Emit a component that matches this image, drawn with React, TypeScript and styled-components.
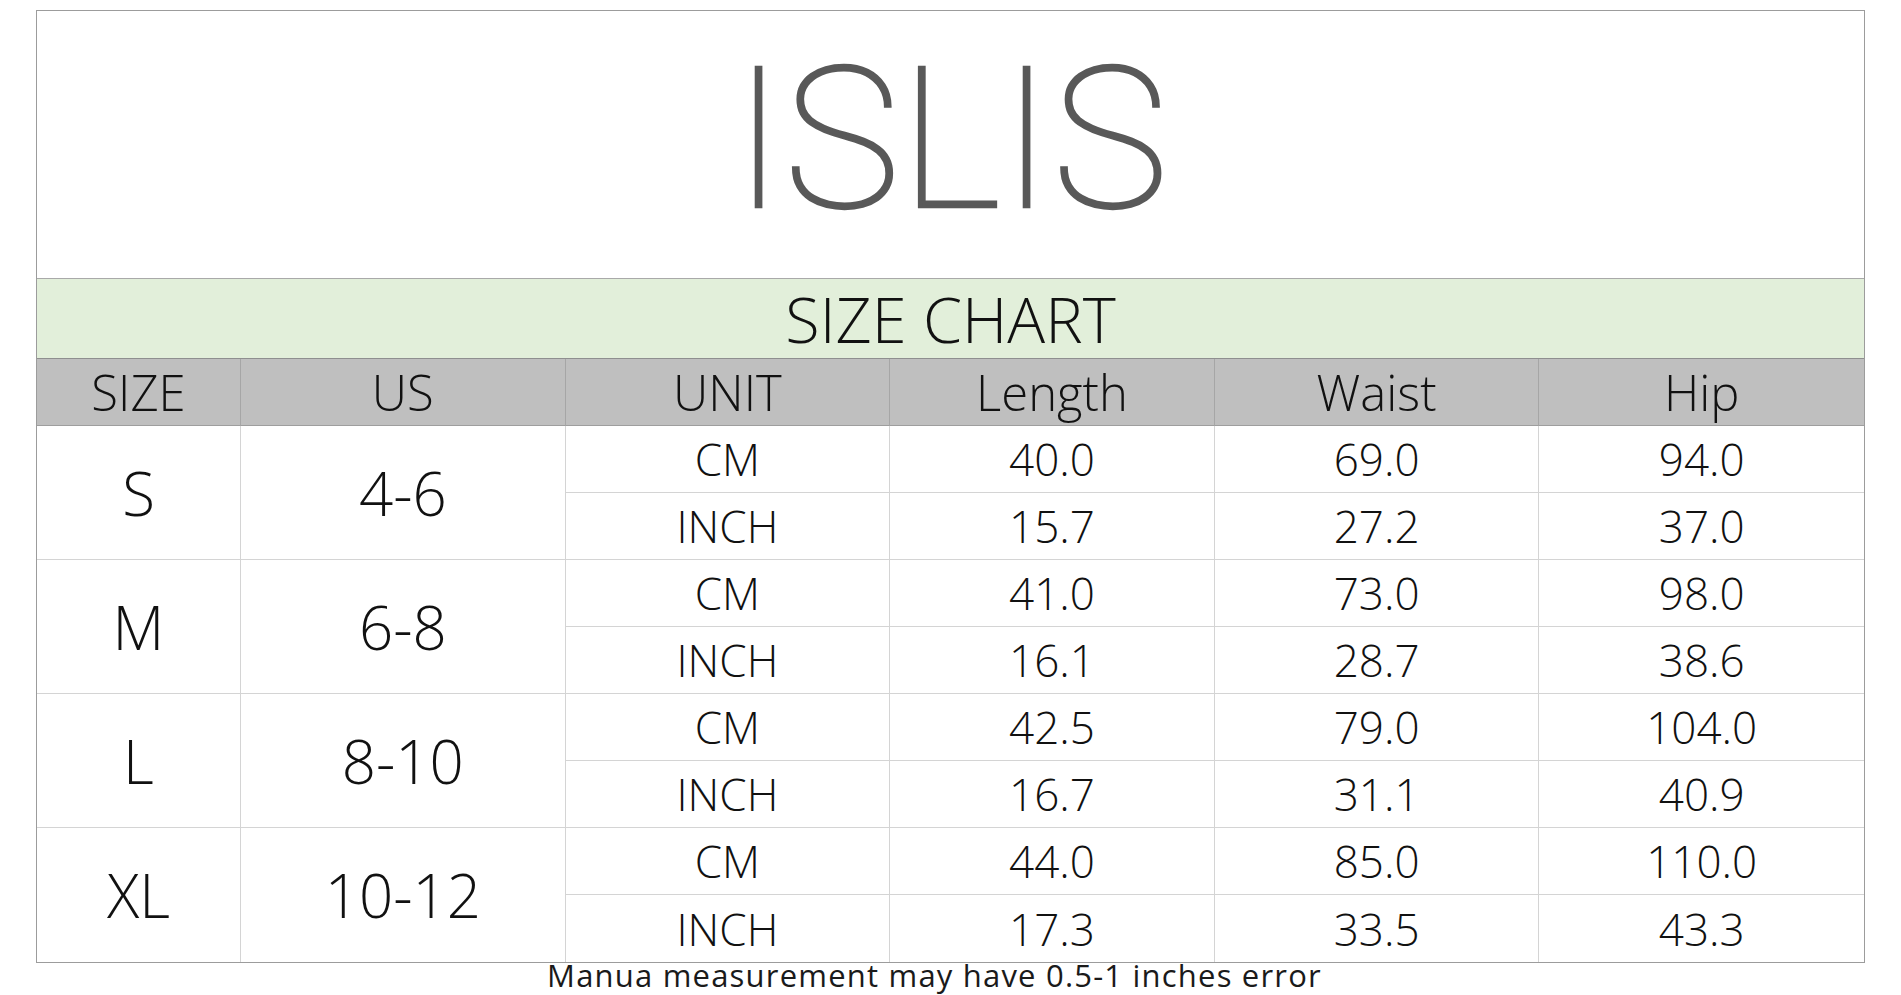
import React from 'react';
import styled, { createGlobalStyle } from 'styled-components';

const GlobalStyle = createGlobalStyle`
  html, body {
    margin: 0;
    padding: 0;
    background: #ffffff;
  }
  body {
    font-family: "Open Sans", "Noto Sans", sans-serif;
    overflow: hidden;
  }
`;

const Page = styled.div`
  width: 1901px;
  height: 995px;
  box-sizing: border-box;
  padding: 10px 0 0 36px;
  overflow: hidden;
`;

const Frame = styled.div`
  width: 1829px;
  box-sizing: border-box;
  border: 1px solid #9c9c9c;
  display: flex;
  flex-direction: column;
`;

const Brand = styled.div`
  height: 268px;
  box-sizing: border-box;
  border-bottom: 1px solid #a9a9a9;
  display: flex;
  align-items: center;
  justify-content: center;
  padding-bottom: 10px;
`;

const Logo = styled.h1`
  margin: 0;
  font-family: Roboto, Lato, sans-serif;
  font-weight: 100;
  font-size: 196px;
  line-height: 1;
  color: #595959;
  -webkit-text-stroke: 2.5px #595959;
  letter-spacing: 0;
`;

const Banner = styled.div`
  height: 80px;
  box-sizing: border-box;
  background: #e2efda;
  border-bottom: 1px solid #8f8f8f;
  display: flex;
  align-items: center;
  justify-content: center;
  font-size: 63px;
  font-weight: 300;
  color: #111;
  line-height: 1;
`;

const Grid = styled.div`
  display: grid;
  grid-template-columns: 204px repeat(5, 1fr);
  grid-auto-rows: 67px;
`;

const HeadCell = styled.div<{ $last?: boolean }>`
  box-sizing: border-box;
  background: #bfbfbf;
  border-right: ${(p) => (p.$last ? 'none' : '1px solid #a6a6a6')};
  border-bottom: 1px solid #9e9e9e;
  display: flex;
  align-items: center;
  justify-content: center;
  font-size: 49px;
  font-weight: 300;
  color: #111;
  line-height: 1;
`;

const Cell = styled.div<{ $last?: boolean; $end?: boolean; $big?: boolean }>`
  box-sizing: border-box;
  grid-row: ${(p) => (p.$big ? 'span 2' : 'auto')};
  border-right: ${(p) => (p.$last ? 'none' : '1px solid #d4d4d4')};
  border-bottom: ${(p) => (p.$end ? 'none' : '1px solid #d4d4d4')};
  display: flex;
  align-items: center;
  justify-content: center;
  font-size: ${(p) => (p.$big ? '60px' : '44px')};
  font-weight: 300;
  color: #111;
  line-height: 1;
`;

const Note = styled.p`
  margin: 0;
  width: 1829px;
  padding: 0 32px 0 0;
  box-sizing: border-box;
  text-align: center;
  font-size: 31px;
  letter-spacing: 1.2px;
  line-height: 24px;
  color: #1a1a1a;
`;

const headers = ['SIZE', 'US', 'UNIT', 'Length', 'Waist', 'Hip'];

const rows = [
  { size: 'S', us: '4-6', cm: ['40.0', '69.0', '94.0'], inch: ['15.7', '27.2', '37.0'] },
  { size: 'M', us: '6-8', cm: ['41.0', '73.0', '98.0'], inch: ['16.1', '28.7', '38.6'] },
  { size: 'L', us: '8-10', cm: ['42.5', '79.0', '104.0'], inch: ['16.7', '31.1', '40.9'] },
  { size: 'XL', us: '10-12', cm: ['44.0', '85.0', '110.0'], inch: ['17.3', '33.5', '43.3'] },
];

export default function App() {
  return (
    <>
      <GlobalStyle />
      <Page>
        <Frame>
          <Brand>
            <Logo>ISLIS</Logo>
          </Brand>
          <Banner>SIZE CHART</Banner>
          <Grid>
            {headers.map((h, i) => (
              <HeadCell key={h} $last={i === headers.length - 1}>
                {h}
              </HeadCell>
            ))}
            {rows.map((r, ri) => {
              const lastGroup = ri === rows.length - 1;
              return (
                <React.Fragment key={r.size}>
                  <Cell $big $end={lastGroup}>{r.size}</Cell>
                  <Cell $big $end={lastGroup}>{r.us}</Cell>
                  <Cell>CM</Cell>
                  {r.cm.map((v, i) => (
                    <Cell key={'c' + i} $last={i === 2}>{v}</Cell>
                  ))}
                  <Cell $end={lastGroup}>INCH</Cell>
                  {r.inch.map((v, i) => (
                    <Cell key={'i' + i} $last={i === 2} $end={lastGroup}>{v}</Cell>
                  ))}
                </React.Fragment>
              );
            })}
          </Grid>
        </Frame>
        <Note>Manua measurement may have 0.5-1 inches error</Note>
      </Page>
    </>
  );
}
